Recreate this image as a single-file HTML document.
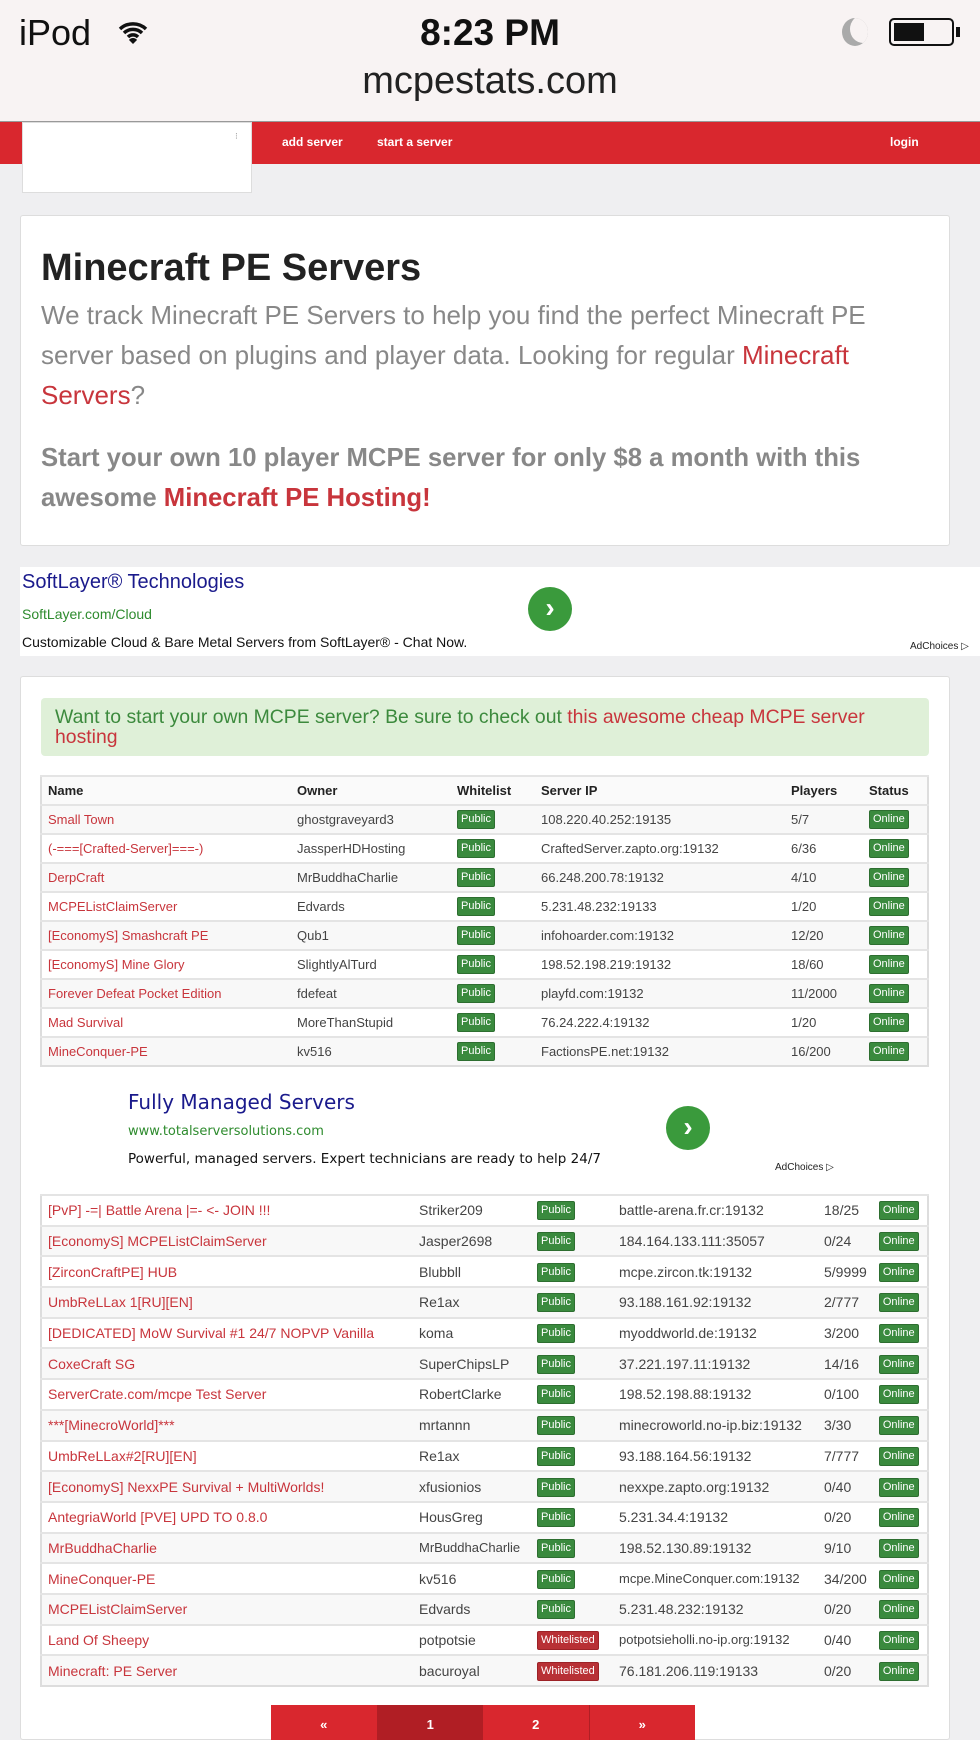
<!DOCTYPE html>
<html><head><meta charset="utf-8"><style>
*{margin:0;padding:0;box-sizing:border-box}
html,body{width:980px;height:1740px;overflow:hidden}
body{background:#efeff1;font-family:"Liberation Sans",sans-serif;position:relative}
.a{position:absolute}
.top{left:0;top:0;width:980px;height:122px;background:#f8f3f3;border-bottom:1px solid #999}
.nav{left:0;top:122px;width:980px;height:42px;background:#d9272e}
.nav span{position:absolute;top:13px;color:#fff;font-size:12px;font-weight:bold}
.card{background:#fff;border:1px solid #ddd;border-radius:3px}
table{border-collapse:collapse;position:absolute;left:40px;width:889px;border:2px solid #ddd;font-size:13px;color:#444}
td,th{text-align:left;padding:0 6px;border-top:2px solid #e4e4e4;white-space:nowrap}
th{font-size:13px;color:#222;background:#fafafa}
tr:nth-child(even) td{background:#f8f8f8}
td.n{color:#c8353c}
.b{display:inline-block;background:#3a8a3e;color:#fff;font-size:11px;padding:2px 3px;border-radius:2px;line-height:13px;border:1px solid #2d6e30}
.w{background:#b83035;border-color:#9c2227}
#t1 tr{height:29px}
#t2 tr{height:30.7px}
#t2 td{font-size:14px}
.circ{width:44px;height:44px;border-radius:50%;background:#3a9a3c;color:#fff;font-size:28px;text-align:center;line-height:42px;font-weight:bold}
</style></head><body>
<div class="a top"></div>
<div class="a" style="left:19px;top:12px;font-size:36px;color:#111">iPod</div>
<svg class="a" style="left:118px;top:20px" width="30" height="26" viewBox="0 0 30 26"><path d="M2 9a19 19 0 0 1 26 0M6 13a13 13 0 0 1 18 0M10 17a7 7 0 0 1 10 0" stroke="#111" stroke-width="3.5" fill="none"/><path d="M15 24l-4-4a5 5 0 0 1 8 0z" fill="#111"/></svg>
<div class="a" style="left:0;width:980px;top:12px;text-align:center;font-size:37px;font-weight:bold;color:#111">8:23 PM</div>
<div class="a" style="left:842px;top:18px;width:26px;height:28px;border-radius:50%;background:#aaa;overflow:hidden"><div style="position:absolute;left:8px;top:-3px;width:26px;height:28px;border-radius:50%;background:#f8f3f3"></div></div>
<div class="a" style="left:889px;top:18px;width:65px;height:28px;border:2px solid #111;border-radius:5px"><div style="margin:3px;width:30px;height:18px;background:#111"></div></div>
<div class="a" style="left:956px;top:27px;width:4px;height:10px;background:#111"></div>
<div class="a" style="left:0;width:980px;top:60px;text-align:center;font-size:38px;color:#222">mcpestats.com</div>
<div class="a nav"><span style="left:282px">add server</span><span style="left:377px">start a server</span><span style="left:890px">login</span></div>
<div class="a" style="left:22px;top:122px;width:230px;height:71px;background:#fff;border:1px solid #ddd"><span style="position:absolute;left:212px;top:8px;font-size:9px;color:#999">⁝</span></div>

<div class="a card" style="left:20px;top:215px;width:930px;height:331px"></div>
<div class="a" style="left:41px;top:247px;font-size:38px;font-weight:bold;color:#222">Minecraft PE Servers</div>
<div class="a" style="left:41px;top:295px;width:850px;font-size:26px;line-height:40px;color:#888">We track Minecraft PE Servers to help you find the perfect Minecraft PE server based on plugins and player data. Looking for regular <span style="color:#c8353c">Minecraft Servers</span>?</div>
<div class="a" style="left:41px;top:438px;width:850px;font-size:25.7px;line-height:40px;color:#888;font-weight:bold">Start your own 10 player MCPE server for only $8 a month with this awesome <span style="color:#c8353c">Minecraft PE Hosting!</span></div>

<div class="a" style="left:20px;top:567px;width:960px;height:89px;background:#fff"></div>
<div class="a" style="left:22px;top:571px;font-size:20px;color:#1a1a8c">SoftLayer® Technologies</div>
<div class="a" style="left:22px;top:606px;font-size:14px;color:#2e8b2e">SoftLayer.com/Cloud</div>
<div class="a" style="left:22px;top:634px;font-size:14px;color:#111">Customizable Cloud &amp; Bare Metal Servers from SoftLayer® - Chat Now.</div>
<div class="a circ" style="left:528px;top:587px">›</div>
<div class="a" style="left:910px;top:641px;font-size:10px;color:#222">AdChoices ▷</div>

<div class="a card" style="left:20px;top:676px;width:930px;height:1064px"></div>
<div class="a" style="left:41px;top:698px;width:888px;height:58px;background:#dff0d8;border-radius:4px;padding:9px 50px 0 14px;font-size:19.4px;line-height:20px;color:#3c8a3d">Want to start your own MCPE server? Be sure to check out <span style="color:#c8353c">this awesome cheap MCPE server hosting</span></div>

<table id="t1" style="top:775px">
<tr><th style="width:250px">Name</th><th style="width:160px">Owner</th><th style="width:84px">Whitelist</th><th style="width:250px">Server IP</th><th style="width:78px">Players</th><th>Status</th></tr>
<tr><td class="n">Small Town</td><td>ghostgraveyard3</td><td><span class="b">Public</span></td><td>108.220.40.252:19135</td><td>5/7</td><td><span class="b">Online</span></td></tr>
<tr><td class="n">(-===[Crafted-Server]===-)</td><td>JassperHDHosting</td><td><span class="b">Public</span></td><td>CraftedServer.zapto.org:19132</td><td>6/36</td><td><span class="b">Online</span></td></tr>
<tr><td class="n">DerpCraft</td><td>MrBuddhaCharlie</td><td><span class="b">Public</span></td><td>66.248.200.78:19132</td><td>4/10</td><td><span class="b">Online</span></td></tr>
<tr><td class="n">MCPEListClaimServer</td><td>Edvards</td><td><span class="b">Public</span></td><td>5.231.48.232:19133</td><td>1/20</td><td><span class="b">Online</span></td></tr>
<tr><td class="n">[EconomyS] Smashcraft PE</td><td>Qub1</td><td><span class="b">Public</span></td><td>infohoarder.com:19132</td><td>12/20</td><td><span class="b">Online</span></td></tr>
<tr><td class="n">[EconomyS] Mine Glory</td><td>SlightlyAlTurd</td><td><span class="b">Public</span></td><td>198.52.198.219:19132</td><td>18/60</td><td><span class="b">Online</span></td></tr>
<tr><td class="n">Forever Defeat Pocket Edition</td><td>fdefeat</td><td><span class="b">Public</span></td><td>playfd.com:19132</td><td>11/2000</td><td><span class="b">Online</span></td></tr>
<tr><td class="n">Mad Survival</td><td>MoreThanStupid</td><td><span class="b">Public</span></td><td>76.24.222.4:19132</td><td>1/20</td><td><span class="b">Online</span></td></tr>
<tr><td class="n">MineConquer-PE</td><td>kv516</td><td><span class="b">Public</span></td><td>FactionsPE.net:19132</td><td>16/200</td><td><span class="b">Online</span></td></tr>
</table>

<div class="a" style="left:128px;top:1090px;font-size:20px;color:#1a1a8c;font-family:'DejaVu Sans',sans-serif">Fully Managed Servers</div>
<div class="a" style="left:128px;top:1124px;font-size:13px;color:#2e8b2e;font-family:'DejaVu Sans',sans-serif">www.totalserversolutions.com</div>
<div class="a" style="left:128px;top:1151px;font-size:13.5px;color:#111;font-family:'DejaVu Sans',sans-serif">Powerful, managed servers. Expert technicians are ready to help 24/7</div>
<div class="a circ" style="left:666px;top:1106px">›</div>
<div class="a" style="left:775px;top:1162px;font-size:10px;color:#222">AdChoices ▷</div>

<table id="t2" style="top:1194px">
<tr><td class="n" style="width:372px">[PvP] -=| Battle Arena |=- &lt;- JOIN !!!</td><td style="width:118px">Striker209</td><td style="width:82px"><span class="b">Public</span></td><td style="width:205px">battle-arena.fr.cr:19132</td><td style="width:54px">18/25</td><td><span class="b">Online</span></td></tr>
<tr><td class="n">[EconomyS] MCPEListClaimServer</td><td>Jasper2698</td><td><span class="b">Public</span></td><td>184.164.133.111:35057</td><td>0/24</td><td><span class="b">Online</span></td></tr>
<tr><td class="n">[ZirconCraftPE] HUB</td><td>Blubbll</td><td><span class="b">Public</span></td><td>mcpe.zircon.tk:19132</td><td>5/9999</td><td><span class="b">Online</span></td></tr>
<tr><td class="n">UmbReLLax 1[RU][EN]</td><td>Re1ax</td><td><span class="b">Public</span></td><td>93.188.161.92:19132</td><td>2/777</td><td><span class="b">Online</span></td></tr>
<tr><td class="n">[DEDICATED] MoW Survival #1 24/7 NOPVP Vanilla</td><td>koma</td><td><span class="b">Public</span></td><td>myoddworld.de:19132</td><td>3/200</td><td><span class="b">Online</span></td></tr>
<tr><td class="n">CoxeCraft SG</td><td>SuperChipsLP</td><td><span class="b">Public</span></td><td>37.221.197.11:19132</td><td>14/16</td><td><span class="b">Online</span></td></tr>
<tr><td class="n">ServerCrate.com/mcpe Test Server</td><td>RobertClarke</td><td><span class="b">Public</span></td><td>198.52.198.88:19132</td><td>0/100</td><td><span class="b">Online</span></td></tr>
<tr><td class="n">***[MinecroWorld]***</td><td>mrtannn</td><td><span class="b">Public</span></td><td>minecroworld.no-ip.biz:19132</td><td>3/30</td><td><span class="b">Online</span></td></tr>
<tr><td class="n">UmbReLLax#2[RU][EN]</td><td>Re1ax</td><td><span class="b">Public</span></td><td>93.188.164.56:19132</td><td>7/777</td><td><span class="b">Online</span></td></tr>
<tr><td class="n">[EconomyS] NexxPE Survival + MultiWorlds!</td><td>xfusionios</td><td><span class="b">Public</span></td><td>nexxpe.zapto.org:19132</td><td>0/40</td><td><span class="b">Online</span></td></tr>
<tr><td class="n">AntegriaWorld [PVE] UPD TO 0.8.0</td><td>HousGreg</td><td><span class="b">Public</span></td><td>5.231.34.4:19132</td><td>0/20</td><td><span class="b">Online</span></td></tr>
<tr><td class="n">MrBuddhaCharlie</td><td style="font-size:13px">MrBuddhaCharlie</td><td><span class="b">Public</span></td><td>198.52.130.89:19132</td><td>9/10</td><td><span class="b">Online</span></td></tr>
<tr><td class="n">MineConquer-PE</td><td>kv516</td><td><span class="b">Public</span></td><td style="font-size:13px">mcpe.MineConquer.com:19132</td><td>34/200</td><td><span class="b">Online</span></td></tr>
<tr><td class="n">MCPEListClaimServer</td><td>Edvards</td><td><span class="b">Public</span></td><td>5.231.48.232:19132</td><td>0/20</td><td><span class="b">Online</span></td></tr>
<tr><td class="n">Land Of Sheepy</td><td>potpotsie</td><td><span class="b w">Whitelisted</span></td><td style="font-size:13px">potpotsieholli.no-ip.org:19132</td><td>0/40</td><td><span class="b">Online</span></td></tr>
<tr><td class="n">Minecraft: PE Server</td><td>bacuroyal</td><td><span class="b w">Whitelisted</span></td><td>76.181.206.119:19133</td><td>0/20</td><td><span class="b">Online</span></td></tr>
</table>

<div class="a" style="left:271px;top:1705px;width:424px;height:35px;display:flex;color:#fff;font-size:13px;font-weight:bold">
<div style="flex:1;background:#d9272e;text-align:center;padding-top:12px;border-right:1px solid #b01e24">«</div>
<div style="flex:1;background:#b01e24;text-align:center;padding-top:12px">1</div>
<div style="flex:1;background:#d9272e;text-align:center;padding-top:12px;border-right:1px solid #b01e24">2</div>
<div style="flex:1;background:#d9272e;text-align:center;padding-top:12px">»</div>
</div>
</body></html>
